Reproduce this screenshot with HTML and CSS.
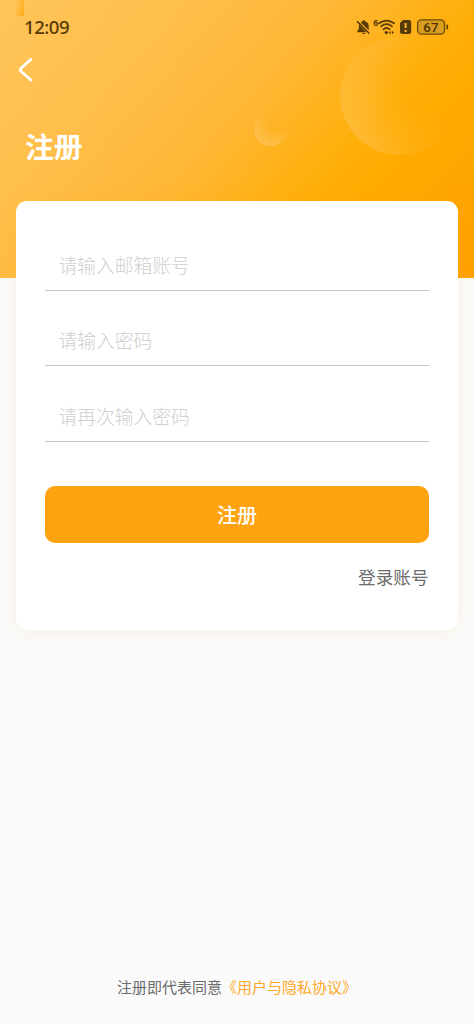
FILE: index.html
```html
<!DOCTYPE html>
<html lang="zh-CN">
<head>
<meta charset="utf-8">
<title>注册</title>
<link rel="stylesheet" href="styles.css">
</head>
<body>
<div class="page">
  <header class="hero">
    <i class="notch"></i><i class="orb orb-large"></i><i class="orb orb-small"></i>
    <div class="status">
      <span class="time">12:09</span>
      <svg class="status-icons" width="94" height="20" viewBox="0 0 94 20" fill="none">
        <g fill="#573a05">
          <path d="M2.3 15.2V13.8L3.8 12.2V7.4L11.4 15.2ZM5.6 5.3C6.4 4.8 7 4.6 7.4 4.5Q7.5 3 8.8 3T10.2 4.5C12.8 5.1 13.7 7 13.7 9.3V13.2Z"/>
          <path d="M7.1 16H10.5Q8.8 18.5 7.1 16Z"/>
        </g>
        <path d="M2.1 4.4L14.3 16.5" stroke="#573a05" stroke-width="1.5"/>
        <text class="wifi-label" x="18.3" y="9">6</text>
        <g stroke="#573a05" stroke-width="1.7" stroke-linecap="round">
          <path d="M24 6.3Q31.5 .9 39 6.3M26 9.3Q31.5 5 37 9.3M28.3 12.3Q31.5 9.7 34.7 12.3"/>
        </g>
        <circle cx="31.3" cy="15.6" r="1.7" fill="#573a05"/>
        <path d="M33.7 15.5L35.7 13.8V17.2ZM39 15.5L37 14V17Z" fill="#573a05"/>
        <path d="M48 3H54Q56.2 3 56.2 5.2V14.8Q56.2 17 54 17H47.2Q45 17 45 14.8V6Z" fill="#573a05"/>
        <path d="M50.6 6V11M50.6 13V15" stroke="#ffb52a" stroke-width="2"/>
        <rect x="62.6" y="2.8" width="27" height="14.4" rx="4" fill="#d79c20" stroke="#6d4906" stroke-width="1.3"/>
        <rect x="91.5" y="7.6" width="1.6" height="4.8" rx=".8" fill="#573a05"/>
        <text class="battery-label" x="76.1" y="14.7" text-anchor="middle">67</text>
      </svg>
    </div>
    <svg class="back" width="16" height="28" viewBox="0 0 16 28"><path d="M13.9 3.4L4 12.2Q2.6 13.7 4 15.2L13.9 24" fill="none" stroke="#fff" stroke-width="2.8" stroke-linecap="round"/></svg>
    <h1 class="title">注册</h1>
  </header>
  <main class="card">
    <div class="field">请输入邮箱账号</div>
    <div class="field">请输入密码</div>
    <div class="field">请再次输入密码</div>
    <button class="submit">注册</button>
    <a class="login">登录账号</a>
  </main>
  <footer class="terms">注册即代表同意<span class="agreement">《用户与隐私协议》</span></footer>
</div>
</body>
</html>
```
FILE: styles.css
```css
* { box-sizing: border-box; }
body {
  margin: 0;
  font-family: "Noto Sans CJK SC", sans-serif;
}
.page {
  height: 1024px;
  display: flex;
  flex-direction: column;
  background: #fafafa;
  overflow: hidden;
}
.hero {
  position: relative;
  flex: none;
  height: 278px;
  background: linear-gradient(132deg, #ffc459 0%, #ffbf4c 25%, #ffb737 46%, #ffae06 68%, #ffa900 78%, #ffa000 100%);
}
.notch {
  position: absolute;
  left: 16px;
  top: 0;
  width: 8px;
  height: 16px;
  background: linear-gradient(100deg, #ffc35600 5%, #ffad17 100%);
}
.orb { position: absolute; border-radius: 50%; }
.orb-large {
  left: 340px;
  top: 37px;
  width: 118px;
  height: 118px;
  background: radial-gradient(circle at 82% 32%, #ffbb3800 28%, #ffbb3855 48%, #ffbb38 85%);
  mask-image: linear-gradient(100deg, #000 25%, #0007 65%, #0002 95%);
}
.orb-small {
  left: 254px;
  top: 113px;
  width: 33px;
  height: 33px;
  background: radial-gradient(circle at 75% 15%, #ffb52600 35%, #ffc355bb 75%);
}
.status {
  position: relative;
  display: flex;
  justify-content: space-between;
  padding: 17px 25px 0 24px;
  height: 56px;
}
.time {
  margin-top: -1px;
  font: 500 18.6px/22px "Noto Sans", sans-serif;
  color: #573a05;
  letter-spacing: -0.5px;
}
.wifi-label { font: 700 9px "Liberation Sans", sans-serif; fill: #573a05; }
.battery-label { font: 500 13.2px Roboto, sans-serif; fill: #4d3304; letter-spacing: .4px; }
.back { display: block; margin-left: 17px; }
.title {
  margin: 41px 0 0 25px;
  font-size: 28.8px;
  line-height: 42px;
  font-weight: 700;
  color: #fff;
}
.card {
  position: relative;
  flex: none;
  display: flex;
  flex-direction: column;
  margin: -77px 16px 0;
  width: 442px;
  height: 429px;
  padding: 14px 29.5px 0 29.4px;
  border-radius: 11px;
  background: #fff;
  box-shadow: 0 0 16px rgba(255, 174, 40, .13);
}
.field {
  height: 75.7px;
  padding: 35.5px 13px 0;
  border-bottom: 1.4px solid #c8c8c8;
  font-size: 18.8px;
  line-height: 28px;
  font-weight: 300;
  color: #cfcfcf;
}
.submit {
  margin-top: 44px;
  height: 57px;
  border: 0;
  border-radius: 10px;
  background: #ffa310;
  color: #fff;
  font: 500 20px/30px "Noto Sans CJK SC", sans-serif;
}
.login {
  margin-top: 20px;
  align-self: flex-end;
  font-size: 17.6px;
  line-height: 28px;
  color: #6b6b6b;
}
.terms {
  margin: auto 0 25px;
  text-align: center;
  font-size: 15px;
  line-height: 24px;
  color: #6b6b6b;
}
.agreement { color: #ffa928; }
```
